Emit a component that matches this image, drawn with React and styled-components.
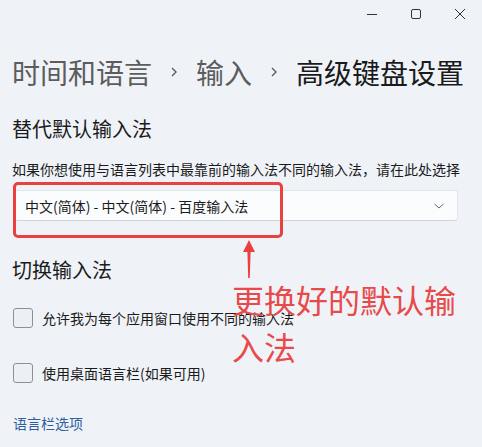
import React from "react";
import styled, { createGlobalStyle } from "styled-components";

const Global = createGlobalStyle`
  html, body { margin: 0; padding: 0; }
  body {
    background: #eff3f8;
    font-family: "Noto Sans CJK SC", "Noto Sans", sans-serif;
    color: #1b1b1b;
    width: 482px;
    height: 447px;
    overflow: hidden;
  }
`;

const Window = styled.div`
  position: relative;
  width: 482px;
  height: 447px;
  background: #eff3f8;
`;

const TitleBar = styled.div`
  display: flex;
  justify-content: flex-end;
  height: 32px;
`;

const Ctrl = styled.div`
  width: 44px;
  height: 28px;
  display: flex;
  align-items: center;
  justify-content: center;
  color: #2a2a2a;
`;

const Page = styled.div`
  padding: 0 12px;
  display: flex;
  flex-direction: column;
`;

const Breadcrumb = styled.div`
  margin-top: 20px;
  display: flex;
  align-items: center;
  font-size: 28px;
  line-height: 40px;
  height: 40px;
  white-space: nowrap;
`;

const Crumb = styled.span`
  color: ${(p) => (p.$current ? "#1a1a1a" : "#5c5c5c")};
`;

const Sep = styled.span`
  display: inline-flex;
  width: 44px;
  justify-content: center;
  color: #5c5c5c;
`;

const Heading = styled.div`
  font-size: 20px;
  line-height: 28px;
  color: #1b1b1b;
  margin-top: ${(p) => p.$mt}px;
`;

const Desc = styled.div`
  font-size: 14px;
  line-height: 20px;
  color: #1b1b1b;
  margin-top: 16px;
  white-space: nowrap;
`;

const SelectWrap = styled.div`
  position: relative;
  margin-top: 11px;
  margin-left: 2px;
  width: 444px;
`;

const Select = styled.div`
  box-sizing: border-box;
  height: 31px;
  background: #fbfcfd;
  border: 1px solid #e3e6ea;
  border-bottom-color: #cfd2d6;
  border-radius: 4px;
  display: flex;
  align-items: center;
  justify-content: space-between;
  padding: 0 12px 0 10px;
  font-size: 14px;
  color: #1b1b1b;
`;

const Highlight = styled.div`
  position: absolute;
  left: -1px;
  top: -8px;
  width: 270px;
  height: 56px;
  box-sizing: border-box;
  border: 3px solid #e8413f;
  border-radius: 5px;
  pointer-events: none;
`;

const Row = styled.div`
  display: flex;
  align-items: center;
  gap: 9px;
  height: 20px;
  margin-top: ${(p) => p.$mt}px;
  margin-left: 1px;
  font-size: 14px;
  color: #1b1b1b;
`;

const Box = styled.div`
  box-sizing: border-box;
  width: 20px;
  height: 20px;
  border: 1px solid #8d9196;
  border-radius: 3px;
  background: #eceff3;
`;

const Link = styled.div`
  margin-top: 30px;
  margin-left: 1px;
  font-size: 14px;
  line-height: 20px;
  color: #2f5f9e;
`;

const Note = styled.div`
  position: absolute;
  left: 232px;
  top: 276px;
  width: 240px;
  font-size: 32px;
  line-height: 47px;
  color: #e84a4a;
`;

const Arrow = styled.svg`
  position: absolute;
  left: 241px;
  top: 239px;
`;

export default function App() {
  return (
    <Window>
      <Global />
      <TitleBar>
        <Ctrl>
          <svg width="12" height="12" viewBox="0 0 12 12">
            <path d="M1 6.5h10" stroke="#333" strokeWidth="1" />
          </svg>
        </Ctrl>
        <Ctrl>
          <svg width="12" height="12" viewBox="0 0 12 12">
            <rect x="1.5" y="1.5" width="9" height="9" rx="1.5" fill="none" stroke="#333" strokeWidth="1" />
          </svg>
        </Ctrl>
        <Ctrl>
          <svg width="12" height="12" viewBox="0 0 12 12">
            <path d="M1 1l10 10M11 1L1 11" stroke="#333" strokeWidth="1" />
          </svg>
        </Ctrl>
      </TitleBar>
      <Page>
        <Breadcrumb>
          <Crumb>时间和语言</Crumb>
          <Sep>
            <svg width="10" height="12" viewBox="0 0 10 12">
              <path d="M3 2l4 4-4 4" fill="none" stroke="#5c5c5c" strokeWidth="1.4" />
            </svg>
          </Sep>
          <Crumb>输入</Crumb>
          <Sep>
            <svg width="10" height="12" viewBox="0 0 10 12">
              <path d="M3 2l4 4-4 4" fill="none" stroke="#5c5c5c" strokeWidth="1.4" />
            </svg>
          </Sep>
          <Crumb $current>高级键盘设置</Crumb>
        </Breadcrumb>
        <Heading $mt={23}>替代默认输入法</Heading>
        <Desc>如果你想使用与语言列表中最靠前的输入法不同的输入法，请在此处选择</Desc>
        <SelectWrap>
          <Select>
            <span>中文(简体) - 中文(简体) - 百度输入法</span>
            <svg width="12" height="8" viewBox="0 0 12 8">
              <path d="M1.5 2l4.5 4 4.5-4" fill="none" stroke="#666" strokeWidth="1" />
            </svg>
          </Select>
          <Highlight />
        </SelectWrap>
        <Heading $mt={35}>切换输入法</Heading>
        <Row $mt={24}>
          <Box />
          <span>允许我为每个应用窗口使用不同的输入法</span>
        </Row>
        <Row $mt={35}>
          <Box />
          <span>使用桌面语言栏(如果可用)</span>
        </Row>
        <Link>语言栏选项</Link>
      </Page>
      <Arrow width="16" height="40" viewBox="0 0 16 40">
        <path d="M8 1L14 13H9.6L8.8 39H7.2L6.4 13H2Z" fill="#e8413f" />
      </Arrow>
      <Note>更换好的默认输入法</Note>
    </Window>
  );
}
